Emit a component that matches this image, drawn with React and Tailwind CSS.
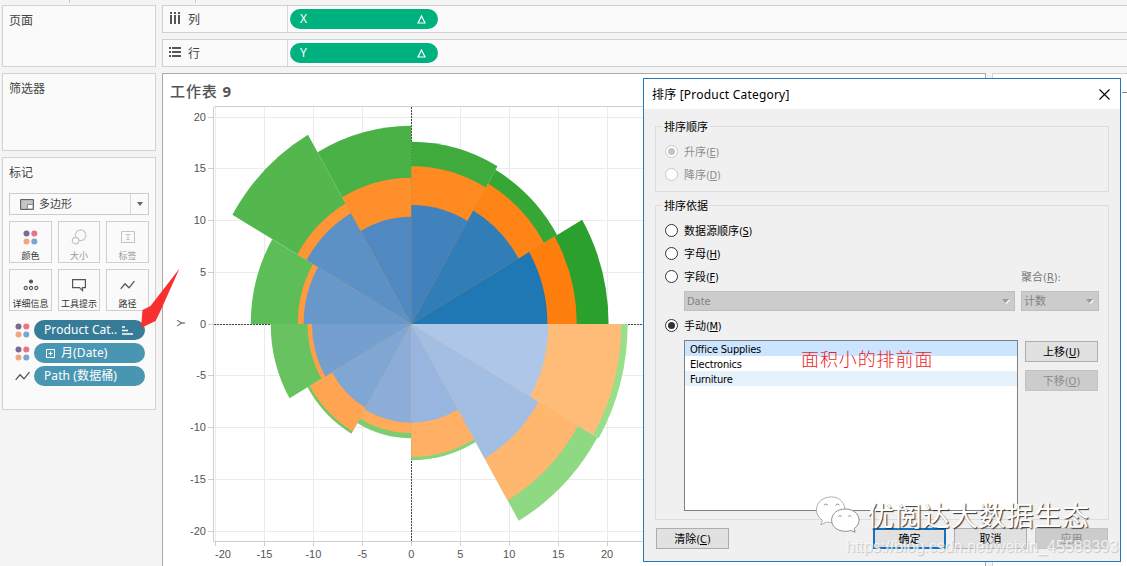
import React from "react";

const uiFont = "font-['Noto_Sans','Noto_Sans_CJK_SC',sans-serif]";
const dialogFont = "font-['DejaVu_Sans_Condensed','Noto_Sans_CJK_SC',sans-serif]";

// Radii of each 30 degree slice, counter-clockwise from the positive x axis
const slices = [
  { blue: 13.9, orange: 16.9, green: 20.15 },
  { blue: 12.65, orange: 15.67, green: 17.2 },
  { blue: 11.5, orange: 15.23, green: 17.6 },
  { blue: 10.37, orange: 14.14, green: 19.16 },
  { blue: 12.35, orange: 13.45, green: 21.1 },
  { blue: 11.0, orange: 11.6, green: 16.4 },
  { blue: 10.15, orange: 10.6, green: 14.36 },
  { blue: 9.35, orange: 11.98, green: 12.24 },
  { blue: 9.53, orange: 10.53, green: 11.05 },
  { blue: 9.53, orange: 12.85, green: 13.17 },
  { blue: 15.0, orange: 19.68, green: 21.95 },
  { blue: 14.0, orange: 21.45, green: 22.1 },
];

const ramps = {
  green: [[44, 160, 44], [152, 223, 138]],
  orange: [[255, 127, 14], [255, 187, 120]],
};

const blues = [
  "#1f77b4",
  "#307db8",
  "#4182bc",
  "#5089c1",
  "#5c91c6",
  "#6898ca",
  "#749fcf",
  "#80a6d3",
  "#8badd8",
  "#97b5de",
  "#a2bee3",
  "#aec7e8",
];

const ticks = [-20, -15, -10, -5, 0, 5, 10, 15, 20];

const CX = 411.3;
const CY = 324;
const SX = 9.79;
const SY = 10.35;

const shade = (name, i) => {
  if (name === "blue") return blues[i];
  const [from, to] = ramps[name];
  const c = from.map((v, k) => Math.round(v + ((to[k] - v) * i) / 11));
  return `rgb(${c.join(",")})`;
};

const wedge = (r, i) => {
  const a = (i * Math.PI) / 6;
  const b = ((i + 1) * Math.PI) / 6;
  const x1 = CX + r * SX * Math.cos(a);
  const y1 = CY - r * SY * Math.sin(a);
  const x2 = CX + r * SX * Math.cos(b);
  const y2 = CY - r * SY * Math.sin(b);
  return `M${CX} ${CY}L${x1} ${y1}A${r * SX} ${r * SY} 0 0 0 ${x2} ${y2}Z`;
};

const Dots = () => (
  <svg width="15" height="15" viewBox="0 0 15 15" className="shrink-0">
    <circle cx="3.5" cy="3.5" r="3" fill="#7b6a97" />
    <circle cx="11.3" cy="3.5" r="3" fill="#ea7384" />
    <circle cx="3.5" cy="11.5" r="3" fill="#f3a57d" />
    <circle cx="11.3" cy="11.5" r="3" fill="#7ba4cf" />
  </svg>
);

const PathIcon = () => (
  <svg width="15" height="10" viewBox="0 0 15 10" fill="none" stroke="#555" strokeWidth="1.3" className="shrink-0">
    <path d="M.7 8.8 5 3.8l4 4L14.4 1.2" />
  </svg>
);

const markButtons = [
  { label: "颜色", icon: <Dots /> },
  {
    label: "大小",
    off: true,
    icon: (
      <svg width="16" height="16" viewBox="0 0 16 16" fill="none" stroke="#c4c4c4" strokeWidth="1.2">
        <path d="M4.6 8A5.3 5.3 0 1 1 8 11.3" />
        <circle cx="4.6" cy="11.6" r="3.3" />
      </svg>
    ),
  },
  {
    label: "标签",
    off: true,
    icon: (
      <svg width="14" height="12" viewBox="0 0 14 12" fill="none" stroke="#c4c4c4">
        <path d="M.5.5h13v11H.5zM4.5 3.5h5M7 3.5v5M5.5 8.5h3" />
      </svg>
    ),
  },
  {
    label: "详细信息",
    icon: (
      <svg width="16" height="12" viewBox="0 0 16 12" fill="none" stroke="#555" strokeWidth="1.1">
        <circle cx="8" cy="2.5" r="1.5" fill="#555" />
        <circle cx="2.7" cy="9" r="1.6" />
        <circle cx="8" cy="9" r="1.6" />
        <circle cx="13.3" cy="9" r="1.6" />
      </svg>
    ),
  },
  {
    label: "工具提示",
    icon: (
      <svg width="14" height="14" viewBox="0 0 14 14" fill="none" stroke="#555" strokeWidth="1.2">
        <path d="M.6 1.6h12.8v8H10.5v3L7.5 9.6H.6z" />
      </svg>
    ),
  },
  { label: "路径", icon: <PathIcon /> },
];

const Shelf = ({ icon, name, field }) => (
  <div className="flex h-[28px] border border-r-0 border-[#d0d0d0] bg-[#fafafa]">
    <div className="flex w-[125px] items-center border-r border-[#d8d8d8] pl-1.5">
      {icon}
      <span className="ml-[7px] pt-0.5 text-[12px] leading-4">{name}</span>
    </div>
    <div className="ml-0.5 mt-[3px] flex h-5 w-[148px] items-center justify-between rounded-full bg-[#00b180] pl-2.5 pr-3 text-[12px] leading-5 text-white">
      <span>{field}</span>
      <svg width="9" height="9" viewBox="0 0 9 9" fill="none" stroke="#fff" strokeWidth="1.2">
        <path d="M4.5 1 8 8H1z" />
      </svg>
    </div>
  </div>
);

const Sidebar = () => (
  <aside className="ml-0.5 mt-[5px] flex w-[154px] shrink-0 flex-col gap-1.5">
    <div className="h-[62px] border border-[#d2d2d2] bg-[#fafafa] pl-1.5 pt-[7px] text-[12px] leading-4">页面</div>
    <div className="h-[78px] border border-[#d2d2d2] bg-[#fafafa] pl-1.5 pt-[7px] text-[12px] leading-4">筛选器</div>
    <div className="h-[253px] border border-[#d2d2d2] bg-[#fafafa] pl-1.5 pt-[7px] text-[12px] leading-4">
      <div>标记</div>
      <div className="mt-3 flex h-[22px] w-[140px] items-center border border-[#cbcbcb] text-[11px]">
        <svg width="14" height="11" viewBox="0 0 14 11" className="ml-2.5">
          <path d="M.6.6h12.8v9.8H.6z" fill="#c4c4c4" stroke="#555" />
          <path d="M7.5 5.5h5.5v4.5H7.5z" fill="#fff" stroke="#777" strokeWidth=".8" />
        </svg>
        <span className="ml-[5px] grow">多边形</span>
        <span className="flex h-full w-[18px] items-center justify-center border-l border-[#d8d8d8]">
          <svg width="6" height="4" viewBox="0 0 6 4" fill="#666">
            <path d="M0 0h6L3 4z" />
          </svg>
        </span>
      </div>
      <div className="mt-1.5 grid w-[140px] grid-cols-[43px_42px_43px] gap-x-1.5 gap-y-1.5">
        {markButtons.map((b) => (
          <div key={b.label} className="flex h-[42px] flex-col items-center border border-[#cfcfcf]">
            <div className="flex h-7 items-center pt-0.5">{b.icon}</div>
            <span
              className={
                b.off
                  ? "whitespace-nowrap text-[9px] leading-3 text-[#999]"
                  : "whitespace-nowrap text-[9px] leading-3 text-[#333]"
              }
            >
              {b.label}
            </span>
          </div>
        ))}
      </div>
      <div className="mt-[9px] flex flex-col gap-[3px] pl-1.5 text-white">
        <div className="flex h-5 items-center">
          <Dots />
          <div className="ml-1 flex h-5 w-[111px] items-center rounded-full bg-[#367c98] pl-2.5">
            <span className="text-[12px] tracking-[0.08px]">Product Cat..</span>
            <svg width="11" height="9" viewBox="0 0 11 9" stroke="#fff" strokeWidth="1.6" className="ml-[5px]">
              <path d="M0 1h3M0 4.5h6M0 8h11" />
            </svg>
          </div>
        </div>
        <div className="flex h-5 items-center">
          <Dots />
          <div className="ml-1 flex h-5 w-[111px] items-center rounded-full bg-[#4996b2] pl-3">
            <svg width="9" height="9" viewBox="0 0 9 9" fill="none" stroke="#fff">
              <path d="M.5.5h8v8h-8zM2.5 4.5h4M4.5 2.5v4" />
            </svg>
            <span className="ml-1.5 text-[12px] tracking-[0.1px]">月(Date)</span>
          </div>
        </div>
        <div className="flex h-5 items-center">
          <PathIcon />
          <div className="ml-1 flex h-5 w-[111px] items-center rounded-full bg-[#4996b2] pl-2.5">
            <span className="text-[12px] tracking-[0.1px]">Path (数据桶)</span>
          </div>
        </div>
      </div>
    </div>
  </aside>
);

const Chart = () => (
  <svg width="822" height="464" viewBox="163 102 822 464" className="block">
    {/* grid and axes */}
    <g stroke="#ebebeb" shapeRendering="crispEdges">
      {ticks.map((t) => (
        <path key={t} d={`M${CX + t * SX} 107V541M214 ${CY - t * SY}H985`} />
      ))}
    </g>
    <g stroke="#d0d0d0" fill="none" shapeRendering="crispEdges">
      <path d="M213.5 106.5H985M213.5 106.5V541.5H985" />
      {ticks.map((t) => (
        <path key={t} d={`M${CX + t * SX} 541v5M208 ${CY - t * SY}h5`} />
      ))}
    </g>
    <path
      d="M411.5 107V541M214 324.5H985"
      stroke="#444"
      strokeDasharray="2 1"
      fill="none"
      shapeRendering="crispEdges"
    />
    {["green", "orange", "blue"].map((name) => (
      <g key={name}>
        {slices.map((s, i) => (
          <path key={i} d={wedge(s[name], i)} fill={shade(name, i)} />
        ))}
      </g>
    ))}
    <g fill="#555" className="font-['Liberation_Sans',sans-serif] text-[11px]">
      {ticks.map((t) => (
        <React.Fragment key={t}>
          <text x="206" y={CY - t * SY + 3.5} textAnchor="end">{t}</text>
          <text x={CX + t * SX + (t === -20 ? 7.5 : 0)} y="558" textAnchor="middle">{t}</text>
        </React.Fragment>
      ))}
      <text transform="translate(185 323) rotate(-90)" textAnchor="middle">Y</text>
    </g>
  </svg>
);

const Radio = ({ label, hot, checked, disabled }) => (
  <div className={disabled ? "flex h-[23px] items-center text-[#8d8d8d]" : "flex h-[23px] items-center text-black"}>
    <span
      className={
        disabled
          ? "flex size-[13px] items-center justify-center rounded-full border border-[#c8c8c8] bg-white"
          : "flex size-[13px] items-center justify-center rounded-full border border-[#333] bg-white"
      }
    >
      {checked && (
        <span className={disabled ? "size-[7px] rounded-full bg-[#c4c4c4]" : "size-[7px] rounded-full bg-[#333]"} />
      )}
    </span>
    <span className="ml-1.5 pt-px">
      {label}
      <span className="tracking-[-0.3px]">
        (<u>{hot}</u>)
      </span>
    </span>
  </div>
);

const Button = ({ label, hot, disabled, primary }) => {
  let tone = "border border-[#adadad] bg-[#e1e1e1]";
  if (disabled) tone = "border border-[#c2c2c2] bg-[#cccccc] text-[#8b8b8b]";
  if (primary) tone = "border-2 border-[#0f73c5] bg-[#e1e1e1]";
  return (
    <div className={`${tone} flex h-[21px] w-[73px] items-center justify-center`}>
      <span className="pt-px">
        {label}
        {hot && (
          <>
            (<u>{hot}</u>)
          </>
        )}
      </span>
    </div>
  );
};

const Select = ({ value, width }) => (
  <div className={`${width} flex h-5 items-center justify-between border border-[#bfbfbf] bg-[#cccccc] pl-0.5 pr-1 text-[#838383]`}>
    <span className="pt-px">{value}</span>
    <svg width="8" height="5" viewBox="0 0 8 5">
      <path d="M1 1h7L4.5 5z" fill="#fff" />
      <path d="M0 0h7L3.5 4z" fill="#999" />
    </svg>
  </div>
);

const SortDialog = () => (
  <div
    className={`${dialogFont} absolute left-[643px] top-[78px] h-[484px] w-[478px] border border-[#2378b5] bg-[#f0f0f0] text-[11px] leading-[15px] text-black`}
  >
    <div className="flex h-[30px] items-center justify-between bg-white pl-2 pr-2.5">
      <span className="font-['Noto_Sans','Noto_Sans_CJK_SC',sans-serif] text-[12px] tracking-[0.2px]">
        排序 [Product Category]
      </span>
      <svg width="11" height="11" viewBox="0 0 11 11" stroke="#000" strokeWidth="1.1">
        <path d="M.5.5l10 10M10.5.5l-10 10" />
      </svg>
    </div>

    <div className="ml-[11px] mt-[17px] h-[66px] w-[454px] border border-[#dcdcdc] pl-[9px]">
      <div className="-mt-[7px] flex h-[15px]">
        <span className="-ml-[3px] bg-[#f0f0f0] px-0.5">排序顺序</span>
      </div>
      <div className="mt-[5px]">
        <Radio label="升序" hot="E" checked disabled />
        <Radio label="降序" hot="D" disabled />
      </div>
    </div>

    <div className="ml-[11px] mt-[13px] h-[315px] w-[454px] border border-[#dcdcdc] pl-[9px]">
      <div className="-mt-[7px] flex h-[15px]">
        <span className="-ml-[3px] bg-[#f0f0f0] px-0.5">排序依据</span>
      </div>
      <div className="mt-[5px]">
        <Radio label="数据源顺序" hot="S" />
        <Radio label="字母" hot="H" />
        <div className="flex items-center">
          <div className="w-[356px]">
            <Radio label="字段" hot="F" />
          </div>
          <span className="pt-px text-[#777]">
            聚合(<u>R</u>):
          </span>
        </div>
      </div>
      <div className="ml-[19px] mt-[3px] flex gap-1.5">
        <Select value="Date" width="w-[331px]" />
        <Select value="计数" width="w-[78px]" />
      </div>
      <div className="mt-[3px]">
        <Radio label="手动" hot="M" checked />
      </div>
      <div className="ml-[19px] mt-[3px] flex gap-[7px]">
        <div className="h-[171px] w-[334px] border border-[#7c7f86] bg-white tracking-[-0.2px] leading-[17px]">
          <div className="h-[15px] bg-[#cce5ff] pl-[5px]">Office Supplies</div>
          <div className="h-[15px] pl-[5px]">Electronics</div>
          <div className="h-[15px] bg-[#e5f1fb] pl-[5px]">Furniture</div>
        </div>
        <div className="flex flex-col gap-2 pt-px">
          <Button label="上移" hot="U" />
          <Button label="下移" hot="O" disabled />
        </div>
      </div>
    </div>

    <div className="mt-2 flex gap-2 pl-3">
      <div className="mr-[136px]">
        <Button label="清除" hot="C" />
      </div>
      <Button label="确定" primary />
      <Button label="取消" />
      <Button label="应用" disabled />
    </div>
  </div>
);

const App = () => (
  <div className={`${uiFont} relative h-[566px] w-[1127px] overflow-hidden bg-[#f4f4f4] text-[#444]`}>
    <div className="flex h-full">
      <Sidebar />
      <main className="ml-1.5 mt-[5px] flex w-[965px] shrink-0 flex-col">
        <Shelf
          name="列"
          field="X"
          icon={
            <svg width="12" height="12" viewBox="0 0 12 12" stroke="#555" strokeWidth="2" strokeDasharray="2 1 10" className="-mt-0.5">
              <path d="M2 0v12M6 0v12M10 0v12" />
            </svg>
          }
        />
        <div className="h-1.5" />
        <Shelf
          name="行"
          field="Y"
          icon={
            <svg width="12" height="12" viewBox="0 0 12 12" stroke="#555" strokeWidth="2" strokeDasharray="2 1 10" className="-mt-0.5">
              <path d="M0 2h12M0 6h12M0 10h12" />
            </svg>
          }
        />
        <div className="mt-1.5 flex grow gap-[6px]">
          <section className="w-[824px] shrink-0 border border-b-0 border-[#aaa] bg-white">
            <h1 className="h-7 pl-[7px] pt-[7px] text-[15px] font-medium leading-5 tracking-[0.9px] text-[#555]">
              工作表 <span className="font-bold">9</span>
            </h1>
            <Chart />
          </section>
          <div className="grow border-l border-t border-[#d2d2d2] bg-white pl-[129px] pt-[15px]">
            <div className="h-1 border-b border-dashed border-[#888]" />
          </div>
        </div>
      </main>
    </div>

    {/* toolbar separators at the top edge */}
    <div className="absolute left-[69px] top-0 h-[3px] w-px bg-[#ccc]" />
    <div className="absolute left-[195px] top-0 h-[3px] w-px bg-[#ccc]" />

    <SortDialog />

    {/* annotations */}
    <svg width="42" height="64" viewBox="0 0 42 64" className="absolute left-[139px] top-[267px]">
      <path d="M40.5 1.5 21 45l-4.5 9L2 61 3.500 43l8-4z" fill="#f8302f" />
    </svg>
    <div className="absolute left-[801px] top-[347px] whitespace-nowrap text-[18px] font-light leading-6 tracking-[0.9px] text-[#ed1c24]">
      面积小的排前面
    </div>

    {/* watermark */}
    <svg width="45" height="39" viewBox="0 0 46 42" preserveAspectRatio="none" className="absolute left-[815px] top-[496px]" fill="#fff" stroke="#888">
      <path d="M17 1C8 1 1.5 7 1.5 15c0 5 2.5 8.5 6 11L6 31l6-3c6 1.5 11 0 14-2l5-8C31 8 26 1 17 1z" stroke="#aaa" />
      <path d="M31 14c-8 0-14 5-14 12s6 12 14 12c2 0 4 0 5-1l5 2-1-4c3-2 5-5 5-9 0-7-6-12-14-12z" />
      <path d="M9 10q2-3 4 0M21 10q2-3 4 0M24 22q1.5-2 3 0M34 22q1.5-2 3 0" fill="none" />
    </svg>
    <div className="absolute left-[867px] top-[498px] whitespace-nowrap text-[27px] font-normal leading-9 tracking-[0.9px] text-white [text-shadow:1px_1px_1px_#333]">
      优阅达大数据生态
    </div>
    <div className="absolute left-[846px] top-[537px] whitespace-nowrap font-['Liberation_Sans',sans-serif] text-[16px] leading-5 text-white/70 [text-shadow:1px_1px_1px_#c4c4c4]">
      https://blog.csdn.net/weixin_45588393
    </div>
  </div>
);

export default App;
